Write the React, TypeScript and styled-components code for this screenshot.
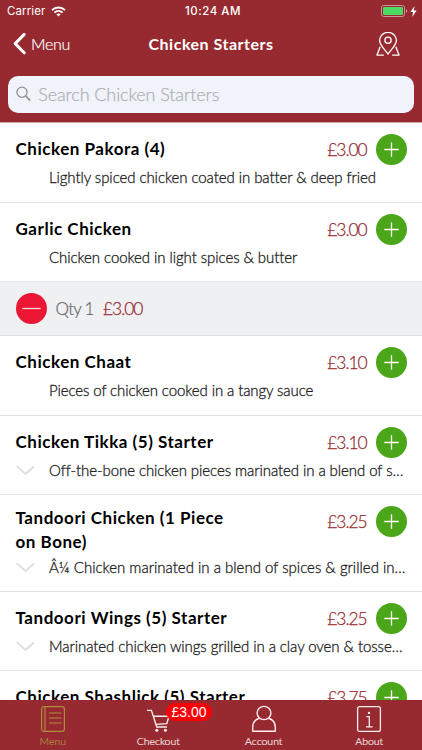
import React from "react";
import styled, { createGlobalStyle } from "styled-components";

const GlobalStyle = createGlobalStyle`
  * { box-sizing: border-box; }
  body { margin: 0; background: #fff; }
`;

const brand = "#962a30";

const Screen = styled.div`
  width: 422px;
  height: 750px;
  display: flex;
  flex-direction: column;
  overflow: hidden;
  background: #fff;
  color: #000;
  font-family: Lato, sans-serif;
  svg { display: block; flex: none; }
`;

const Header = styled.header`
  flex: none;
  height: 123px;
  background: ${brand};
  border-bottom: 1px solid #d3a3a6;
  color: #fff;
`;

const StatusBar = styled.div`
  height: 22px;
  padding: 0 5px 0 7px;
  display: grid;
  grid-template-columns: 1fr auto 1fr;
  align-items: center;
  font: 400 11.5px/22px Inter, sans-serif;
`;

const Carrier = styled.div`
  display: flex;
  align-items: center;
  gap: 6px;
  letter-spacing: 0.1px;
`;

const Clock = styled.div`
  padding-left: 2px;
  font-weight: 500;
  letter-spacing: 0.5px;
`;

const Power = styled.div`
  display: flex;
  align-items: center;
  justify-content: flex-end;
  gap: 2px;
`;

const NavBar = styled.nav`
  height: 44px;
  padding: 0 22px 0 13px;
  display: grid;
  grid-template-columns: 1fr auto 1fr;
  align-items: center;
`;

const Back = styled.div`
  display: flex;
  align-items: center;
  gap: 4px;
  font-size: 16px;
  font-weight: 300;
  line-height: 20px;
  letter-spacing: -0.3px;
  -webkit-text-stroke: 0.2px;
`;

const NavTitle = styled.h1`
  margin: 0;
  padding-left: 9px;
  font-size: 16px;
  font-weight: 700;
  line-height: 20px;
  letter-spacing: 0.51px;
`;

const NavAction = styled.div`
  display: flex;
  justify-content: flex-end;
`;

const SearchField = styled.div`
  height: 37px;
  margin: 9.5px 8.4px 0 8.2px;
  padding-left: 8px;
  display: flex;
  align-items: center;
  gap: 7px;
  border-radius: 10px;
  background: #f0f3f9;
  color: #afb1b7;
  font-size: 18px;
  font-weight: 300;
  line-height: 22px;
  letter-spacing: -0.1px;
  -webkit-text-stroke: 0.25px;
`;

const List = styled.main`
  flex: 1;
  min-height: 0;
  overflow: hidden;
`;

const Row = styled.section<{ $height: number }>`
  height: ${(p) => p.$height}px;
  padding: 11px 15.5px 0;
  display: flex;
  flex-direction: column;
  gap: 2px;
  border-bottom: 1px solid #e3e3e5;
`;

const RowHead = styled.div`
  display: flex;
  align-items: flex-start;
`;

const ItemTitle = styled.h2<{ $wrapped: boolean }>`
  flex: 1;
  margin: ${(p) => (p.$wrapped ? "0 0 2px" : "3px 0 0")};
  white-space: pre-line;
  font-size: 17px;
  font-weight: 700;
  line-height: 23.5px;
  letter-spacing: 0.53px;
`;

const Price = styled.span`
  color: ${brand};
  font-size: 17.4px;
  font-weight: 300;
  line-height: 31px;
  letter-spacing: -1.05px;
  -webkit-text-stroke: 0.25px;
`;

const RoundButton = styled.button<{ $tone: "add" | "remove" }>`
  flex: none;
  width: 31px;
  height: 31px;
  margin: 0;
  padding: 0;
  display: grid;
  place-items: center;
  border: 0;
  border-radius: 50%;
  background: ${(p) => (p.$tone === "add" ? "#4ca619" : "#ea1633")};
`;

const Purchase = styled.div`
  display: flex;
  gap: 9px;
`;

const Detail = styled.div`
  display: grid;
  grid-template-columns: 33.5px 1fr;
  align-items: center;
`;

const Description = styled.p<{ $spacing: number }>`
  grid-column: 2;
  margin: 0 -8px 0 0;
  white-space: nowrap;
  color: #222;
  font-size: 15px;
  font-weight: 300;
  line-height: 20px;
  letter-spacing: ${(p) => p.$spacing}px;
  -webkit-text-stroke: 0.3px;
`;

const QuantityRow = styled.section`
  height: 54px;
  padding-left: 15.5px;
  display: flex;
  align-items: center;
  background: #eff0f2;
  border-bottom: 1px solid #dedfe1;
`;

const Quantity = styled.span`
  margin: 0 9.5px 0 9px;
  color: #666;
  font-size: 17px;
  font-weight: 300;
  letter-spacing: -0.75px;
  -webkit-text-stroke: 0.2px;
`;

const TabBar = styled.footer`
  flex: none;
  height: 50px;
  display: grid;
  grid-template-columns: repeat(4, 1fr);
  background: ${brand};
`;

const Tab = styled.div<{ $active?: boolean }>`
  position: relative;
  padding-top: 5px;
  display: flex;
  flex-direction: column;
  align-items: center;
  gap: 2.4px;
  color: ${(p) => (p.$active ? "#ad8c3f" : "#fbeeee")};
  font-size: 10.5px;
  font-weight: 300;
  line-height: 12px;
  -webkit-text-stroke: 0.2px;
`;

const Badge = styled.span`
  position: absolute;
  top: 3px;
  left: 60.5px;
  height: 18px;
  padding: 0 5.5px;
  border-radius: 9px;
  background: #fb0006;
  color: #fff;
  font: 14px/18px "Liberation Sans", sans-serif;
  -webkit-text-stroke: 0;
`;

const PlusIcon = () => (
  <svg width="15" height="15" viewBox="0 0 15 15" stroke="#fff" strokeWidth="1.3">
    <path d="M0.3 7.5H14.7M7.5 0.3V14.7" />
  </svg>
);

const MinusIcon = () => (
  <svg width="19" height="3" viewBox="0 0 19 3" stroke="#ffd5da" strokeWidth="1.3">
    <path d="M0.3 1.5H18.7" />
  </svg>
);

const ExpandIcon = () => (
  <svg width="19" height="11" viewBox="0 0 19 11" fill="none" stroke="#dddfe4" strokeWidth="1.9">
    <path d="M0.8 1.2L9.5 9L18.2 1.2" />
  </svg>
);

const WifiIcon = () => (
  <svg width="15" height="11" viewBox="0 0 15 11" fill="none" stroke="#fff" strokeWidth="1.9">
    <path d="M1 4.1C4.7.6 10.3.6 14 4.1M3.4 6.6C5.8 4.5 9.2 4.5 11.6 6.6" />
    <path d="M5.4 8.3Q7.5 6.8 9.6 8.3L7.5 10.5Z" fill="#fff" stroke="none" />
  </svg>
);

const BatteryIcon = () => (
  <svg width="27" height="12" viewBox="0 0 27 12">
    <rect x="0.5" y="0.5" width="23" height="11" rx="2.2" fill="none" stroke="#c99598" />
    <rect x="2" y="2" width="20" height="8" rx="1" fill="#4cd964" />
    <path d="M25 4V8Q26.3 7.5 26.3 6T25 4Z" fill="#c99598" />
  </svg>
);

const BoltIcon = () => (
  <svg width="7" height="11" viewBox="0 0 7 11" fill="#fff">
    <path d="M4.5 0L0.4 6H3.1L2.3 11L6.6 4.6H3.8Z" />
  </svg>
);

const BackIcon = () => (
  <svg width="14" height="22" viewBox="0 0 14 22" fill="none" stroke="#fff" strokeWidth="3" strokeLinecap="round" strokeLinejoin="round">
    <path d="M11.2 1.4L2.2 10.6L11.2 19.8" />
  </svg>
);

const MapPinIcon = () => (
  <svg width="24" height="25" viewBox="0 0 24 25" fill="none" stroke="#fff" strokeWidth="1.3" strokeLinejoin="round">
    <path d="M12 22C8.8 17.6 3.6 13.2 3.6 8.6A8.4 8.2 0 0 1 20.4 8.6C20.4 13.2 15.2 17.6 12 22Z" />
    <circle cx="12" cy="8.2" r="3.1" />
    <path d="M4.2 14.7L1 23.1H7.8M19.8 14.7L23 23.1H16.2" />
  </svg>
);

const SearchIcon = () => (
  <svg width="15" height="16" viewBox="0 0 15 16" fill="none" stroke="#8d9096" strokeWidth="1.3">
    <circle cx="6" cy="6.2" r="5.1" />
    <path d="M9.6 9.8L14.2 14.6" strokeWidth="1.6" />
  </svg>
);

const MenuIcon = () => (
  <svg width="26" height="28" viewBox="0 0 26 28" fill="none" stroke="currentColor" strokeWidth="1.2">
    <rect x="1.6" y="1.6" width="22.8" height="24.8" rx="2.4" />
    <path d="M5 1.6V26.4M9 8H21.2M9 13H21.2M9 18H21.2" />
  </svg>
);

const CartIcon = () => (
  <svg width="26" height="28" viewBox="0 0 26 28" fill="none" stroke="currentColor" strokeWidth="1.4">
    <path d="M2 5.4H6.4L11.8 22H22M8.2 11.2H24L21.8 18.6L10.8 19.4" />
    <circle cx="11.8" cy="25.3" r="1.5" fill="currentColor" stroke="none" />
    <circle cx="20.4" cy="25.3" r="1.5" fill="currentColor" stroke="none" />
  </svg>
);

const AccountIcon = () => (
  <svg width="26" height="28" viewBox="0 0 26 28" fill="none" stroke="currentColor" strokeWidth="1.4" strokeLinejoin="round">
    <ellipse cx="13" cy="8" rx="6.9" ry="6.6" />
    <path d="M8.6 13.2C4.1 14.4 1.7 18 1.7 22.5V26.3H24.3V22.5C24.3 18 21.9 14.4 17.4 13.2" />
  </svg>
);

const AboutIcon = () => (
  <svg width="26" height="28" viewBox="0 0 26 28" fill="none" stroke="currentColor" strokeWidth="1.3">
    <rect x="1.6" y="1.6" width="22.8" height="24.8" rx="2" />
    <path d="M10.3 11.6H13.3V21.8M10 21.8H16.6" />
    <circle cx="13" cy="7.9" r="1.2" fill="currentColor" stroke="none" />
  </svg>
);

type Item = {
  title: string;
  price: string;
  description: string;
  height: number;
  spacing?: number;
  expandable?: boolean;
  quantity?: number;
};

const items: Item[] = [
  { title: "Chicken Pakora (4)", price: "£3.00", description: "Lightly spiced chicken coated in batter & deep fried", height: 80 },
  { title: "Garlic Chicken", price: "£3.00", description: "Chicken cooked in light spices & butter", height: 79, quantity: 1 },
  { title: "Chicken Chaat", price: "£3.10", description: "Pieces of chicken cooked in a tangy sauce", height: 80, spacing: -0.1 },
  { title: "Chicken Tikka (5) Starter", price: "£3.10", description: "Off-the-bone chicken pieces marinated in a blend of s…", height: 79, expandable: true },
  { title: "Tandoori Chicken (1 Piece\non Bone)", price: "£3.25", description: "Â¼ Chicken marinated in a blend of spices & grilled in…", height: 97, spacing: 0, expandable: true },
  { title: "Tandoori Wings (5) Starter", price: "£3.25", description: "Marinated chicken wings grilled in a clay oven & tosse…", height: 79, expandable: true },
  { title: "Chicken Shashlick (5) Starter", price: "£3.75", description: "", height: 79 },
];

const MenuItem = ({ item }: { item: Item }) => (
  <>
    <Row $height={item.height}>
      <RowHead>
        <ItemTitle $wrapped={item.title.includes("\n")}>{item.title}</ItemTitle>
        <Purchase>
          <Price>{item.price}</Price>
          <RoundButton $tone="add" aria-label="Add"><PlusIcon /></RoundButton>
        </Purchase>
      </RowHead>
      <Detail>
        {item.expandable && <ExpandIcon />}
        <Description $spacing={item.spacing ?? -0.07}>{item.description}</Description>
      </Detail>
    </Row>
    {item.quantity && (
      <QuantityRow>
        <RoundButton $tone="remove" aria-label="Remove"><MinusIcon /></RoundButton>
        <Quantity>Qty {item.quantity}</Quantity>
        <Price>{item.price}</Price>
      </QuantityRow>
    )}
  </>
);

export default function App() {
  return (
    <Screen>
      <GlobalStyle />
      <Header>
        <StatusBar>
          <Carrier>Carrier <WifiIcon /></Carrier>
          <Clock>10:24 AM</Clock>
          <Power><BatteryIcon /><BoltIcon /></Power>
        </StatusBar>
        <NavBar>
          <Back><BackIcon />Menu</Back>
          <NavTitle>Chicken Starters</NavTitle>
          <NavAction><MapPinIcon /></NavAction>
        </NavBar>
        <SearchField><SearchIcon />Search Chicken Starters</SearchField>
      </Header>
      <List>
        {items.map((item) => <MenuItem key={item.title} item={item} />)}
      </List>
      <TabBar>
        <Tab $active><MenuIcon />Menu</Tab>
        <Tab><CartIcon />Checkout<Badge>£3.00</Badge></Tab>
        <Tab><AccountIcon />Account</Tab>
        <Tab><AboutIcon />About</Tab>
      </TabBar>
    </Screen>
  );
}
